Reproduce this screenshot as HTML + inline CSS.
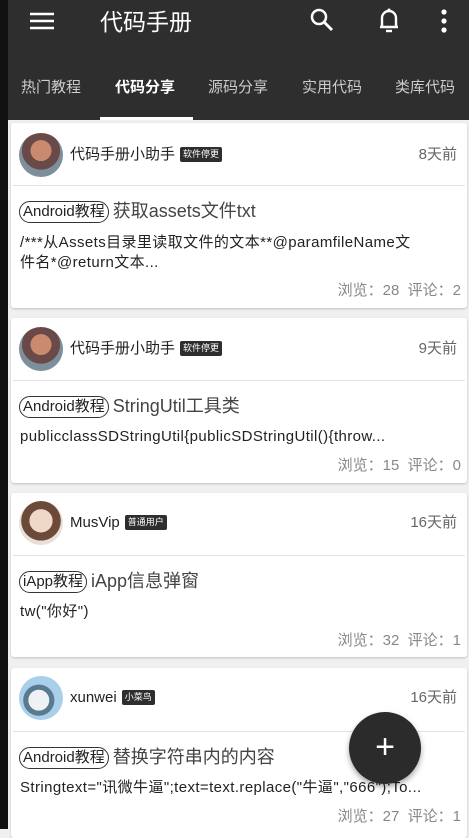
<!DOCTYPE html>
<html><head><meta charset="utf-8"><style>
*{margin:0;padding:0;box-sizing:border-box}
body{width:469px;height:829px;overflow:hidden;background:#f0f0f0;font-family:"Liberation Sans","Noto Sans CJK SC",sans-serif;position:relative}
.strip{position:absolute;left:0;top:0;width:8px;height:829px;background:#111;z-index:5}
.hdr{position:absolute;left:0;top:0;width:469px;height:120px;background:#2e2e2e}
.title{position:absolute;left:100px;top:6px;color:#fff;font-size:23px;line-height:32px}
.tabs span{position:absolute;top:78px;color:#ccc;font-size:15px;line-height:20px}
.ind{position:absolute;left:100px;top:117px;width:93px;height:3px;background:#fff}
.card{position:absolute;left:11px;width:456px;background:#fff;border-radius:3px;box-shadow:0 1px 2px rgba(0,0,0,.2)}
.av{position:absolute;left:8px;width:44px;height:44px;border-radius:50%}
.name{position:absolute;left:59px;font-size:15px;color:#222;line-height:20px}
.badge{display:inline-block;background:#2e2e2e;color:#fff;font-size:9px;line-height:15px;padding:0 3px;border-radius:2px;margin-left:5px;vertical-align:2px}
.time{position:absolute;right:10px;font-size:15px;color:#666;line-height:20px}
.div{position:absolute;left:2px;right:2px;height:1px;background:#e2e2e2}
.t{position:absolute;left:8px;font-size:18px;color:#444;line-height:24px;white-space:nowrap}
.tag{display:inline-block;border:1.5px solid #333;border-radius:12px;font-size:15px;color:#222;padding:0 3px;line-height:20px;margin-right:4px;vertical-align:1px}
.d{position:absolute;left:9px;right:8px;font-size:15px;color:#222;line-height:20px;letter-spacing:0.4px;overflow:hidden}
.s{position:absolute;right:6px;font-size:15px;color:#888;line-height:20px}
.fab{position:absolute;left:349px;top:712px;width:72px;height:72px;border-radius:50%;background:#2b2b2b;box-shadow:0 3px 6px rgba(0,0,0,.35);color:#fff;font-size:34px;text-align:center;line-height:70px}
</style></head><body>
<div class="strip"></div>
<div class="hdr">
<svg style="position:absolute;left:29px;top:12px" width="26" height="20"><g stroke="#fff" stroke-width="2.5"><line x1="1" y1="2" x2="25" y2="2"/><line x1="1" y1="9" x2="25" y2="9"/><line x1="1" y1="16" x2="25" y2="16"/></g></svg>
<div class="title">代码手册</div>
<svg style="position:absolute;left:309px;top:7px" width="26" height="26"><circle cx="10" cy="10" r="7" stroke="#fff" stroke-width="2.5" fill="none"/><line x1="15" y1="15" x2="23" y2="23" stroke="#fff" stroke-width="2.8"/></svg>
<svg style="position:absolute;left:377px;top:7px" width="24" height="28"><path d="M5 20V11a7 7 0 0 1 14 0v9H3h18" stroke="#fff" stroke-width="2.4" fill="none"/><circle cx="12" cy="3" r="1.5" fill="#fff"/><path d="M9 24h6" stroke="#fff" stroke-width="2.4"/></svg>
<svg style="position:absolute;left:440px;top:9px" width="8" height="24"><circle cx="4" cy="3" r="2.6" fill="#fff"/><circle cx="4" cy="12" r="2.6" fill="#fff"/><circle cx="4" cy="21" r="2.6" fill="#fff"/></svg>
<div class="tabs"><span style="left:21px">热门教程</span><span style="left:115px;color:#fff;font-weight:bold">代码分享</span><span style="left:208px">源码分享</span><span style="left:302px">实用代码</span><span style="left:395px">类库代码</span></div>
<div class="ind"></div>
</div>

<div class="card" style="top:123px;height:185px">
<div class="av" style="top:10px;background:radial-gradient(circle at 50% 40%,#c98a70 0 30%,#6a4a48 31% 55%,#7d8f9a 56%)"></div>
<div class="name" style="top:22px">代码手册小助手<span class="badge">软件停更</span></div>
<div class="time" style="top:22px">8天前</div>
<div class="div" style="top:62px"></div>
<div class="t" style="top:76px"><span class="tag">Android教程</span>获取assets文件txt</div>
<div class="d" style="top:110px">/***从Assets目录里读取文件的文本**@paramfileName文<br>件名*@return文本...</div>
<div class="s" style="top:158px">浏览：28&nbsp;&nbsp;评论：2</div>
</div>

<div class="card" style="top:318px;height:165px">
<div class="av" style="top:9px;background:radial-gradient(circle at 50% 40%,#c98a70 0 30%,#6a4a48 31% 55%,#7d8f9a 56%)"></div>
<div class="name" style="top:21px">代码手册小助手<span class="badge">软件停更</span></div>
<div class="time" style="top:21px">9天前</div>
<div class="div" style="top:62px"></div>
<div class="t" style="top:76px"><span class="tag">Android教程</span>StringUtil工具类</div>
<div class="d" style="top:109px;white-space:nowrap">publicclassSDStringUtil{publicSDStringUtil(){throw...</div>
<div class="s" style="top:138px">浏览：15&nbsp;&nbsp;评论：0</div>
</div>

<div class="card" style="top:493px;height:164px">
<div class="av" style="top:8px;background:radial-gradient(circle at 50% 45%,#f0d8c8 0 35%,#6b4a3a 36% 60%,#e8e0d8 61%)"></div>
<div class="name" style="top:20px">MusVip<span class="badge">普通用户</span></div>
<div class="time" style="top:20px">16天前</div>
<div class="div" style="top:62px"></div>
<div class="t" style="top:76px"><span class="tag">iApp教程</span>iApp信息弹窗</div>
<div class="d" style="top:109px">tw("你好")</div>
<div class="s" style="top:138px">浏览：32&nbsp;&nbsp;评论：1</div>
</div>

<div class="card" style="top:668px;height:170px">
<div class="av" style="top:8px;background:radial-gradient(circle at 45% 55%,#eef2f5 0 30%,#5a7a90 31% 45%,#a8d0ea 46%)"></div>
<div class="name" style="top:20px">xunwei<span class="badge">小菜鸟</span></div>
<div class="time" style="top:20px">16天前</div>
<div class="div" style="top:63px"></div>
<div class="t" style="top:77px"><span class="tag">Android教程</span>替换字符串内的内容</div>
<div class="d" style="top:110px;white-space:nowrap">Stringtext="讯微牛逼";text=text.replace("牛逼","666");To...</div>
<div class="s" style="top:139px">浏览：27&nbsp;&nbsp;评论：1</div>
</div>

<div class="fab">+</div>
</body></html>
